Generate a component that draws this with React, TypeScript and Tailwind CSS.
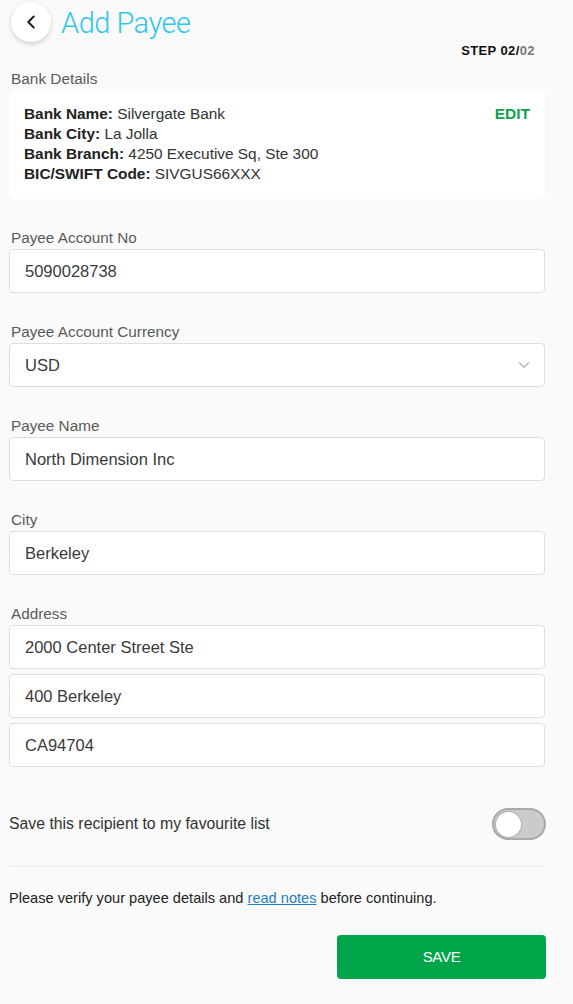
import { ChevronDown, ChevronLeft } from "lucide-react";

type FieldProps = {
  label: string;
  values: string[];
  select?: boolean;
};

function Field({ label, values, select }: FieldProps) {
  return (
    <div className="mt-[31px] first:mt-[32px]">
      <p className="pl-[2px] text-[15.3px] leading-4 text-[#5a5a5a]">{label}</p>
      <div className="mt-[3px] flex flex-col gap-[5px]">
        {values.map((value) => (
          <div
            key={value}
            className="flex h-[44px] items-center justify-between rounded-[4px] border border-[#dedede] bg-white pl-[15px] pr-[11px] text-[16.5px] text-[#3a3a3a]"
          >
            <span>{value}</span>
            {select && <ChevronDown className="h-[18px] w-[18px] text-[#b0b0b0]" strokeWidth={1.5} />}
          </div>
        ))}
      </div>
    </div>
  );
}

export default function App() {
  return (
    <div className="min-h-[1004px] bg-[#fafafa] font-['Liberation_Sans',Arial,sans-serif] text-[#333]">
      <div className="ml-[9px] w-[536px] pb-[26px]">
        <header className="flex h-[44px] items-center">
          <button className="ml-[2px] flex h-[40px] w-[40px] items-center justify-center rounded-full bg-white shadow-[0_2px_5px_rgba(0,0,0,0.18)]">
            <ChevronLeft className="h-[22px] w-[22px] text-[#222]" strokeWidth={2.2} />
          </button>
          <h1 className="ml-[10px] pt-[3px] font-['Roboto',sans-serif] text-[29px] font-light tracking-[-0.5px] text-[#2ec6f0]">
            Add Payee
          </h1>
        </header>

        <p className="pr-[10px] text-right text-[13px] font-bold leading-[14px] tracking-[0.4px] text-[#111]">
          STEP 02/<span className="text-[#777]">02</span>
        </p>

        <p className="mt-[13px] pl-[2px] text-[15.4px] leading-4 text-[#5a5a5a]">Bank Details</p>

        <section className="mt-[4px] flex justify-between rounded-[6px] bg-white pb-[15px] pl-[15px] pr-[15px] pt-[13px] text-[15.4px] leading-5 text-[#333]">
          <div>
            <p><b className="text-[#222]">Bank Name:</b> Silvergate Bank</p>
            <p><b className="text-[#222]">Bank City:</b> La Jolla</p>
            <p><b className="text-[#222]">Bank Branch:</b> 4250 Executive Sq, Ste 300</p>
            <p><b className="text-[#222]">BIC/SWIFT Code:</b> SIVGUS66XXX</p>
          </div>
          <button className="self-start text-[15.5px] font-bold text-[#0d9f4f]">EDIT</button>
        </section>

        <Field label="Payee Account No" values={["5090028738"]} />
        <Field label="Payee Account Currency" values={["USD"]} select />
        <Field label="Payee Name" values={["North Dimension Inc"]} />
        <Field label="City" values={["Berkeley"]} />
        <Field label="Address" values={["2000 Center Street Ste", "400 Berkeley", "CA94704"]} />

        <div className="mt-[41px] flex items-center justify-between">
          <p className="text-[15.8px] text-[#333]">Save this recipient to my favourite list</p>
          <div className="mr-[-1px] flex h-[32px] w-[54px] items-center rounded-full border-2 border-[#a9a9a9] bg-[#cbcbcb] pl-[2px]">
            <div className="h-[25px] w-[25px] rounded-full bg-white shadow-[0_0_0_1px_rgba(0,0,0,0.12)]" />
          </div>
        </div>

        <hr className="mt-[26px] border-[#ececec]" />

        <p className="mt-[21px] text-[14.6px] text-[#222]">
          Please verify your payee details and{" "}
          <a href="#" className="text-[#1e7fc4] underline">read notes</a> before continuing.
        </p>

        <div className="mt-[25px] flex justify-end">
          <button className="mr-[-1px] h-[44px] w-[209px] rounded-[4px] bg-[#00a54a] text-[15px] tracking-[-0.3px] text-white">
            SAVE
          </button>
        </div>
      </div>
    </div>
  );
}
